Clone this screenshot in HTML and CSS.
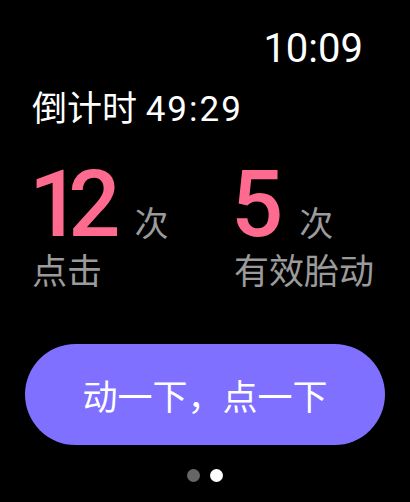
FILE: index.html
```html
<!DOCTYPE html>
<html lang="zh-CN">

<head>
    <meta charset="UTF-8">
    <meta name="viewport" content="width=device-width, initial-scale=1.0">
    <title>胎动计数</title>
    <link rel="stylesheet" href="styles.css">
</head>

<body>

    <div class="screen">
        <div class="clock">10:09</div>

        <div class="countdown">倒计时 <span class="countdown-time">49:29</span></div>

        <div class="stats">
            <div class="stat">
                <div class="stat-value"><span class="stat-number tight">12</span><span class="stat-unit">次</span></div>
                <div class="stat-label">点击</div>
            </div>
            <div class="stat">
                <div class="stat-value"><span class="stat-number">5</span><span class="stat-unit">次</span></div>
                <div class="stat-label">有效胎动</div>
            </div>
        </div>

        <button class="tap-button" type="button">动一下，点一下</button>

        <div class="dots">
            <span class="dot"></span>
            <span class="dot active"></span>
        </div>
    </div>

</body>

</html>
```

FILE: styles.css
```css
body {
    margin: 0;
    background: #000;
    font-family: Roboto, "Noto Sans CJK SC", sans-serif;
    color: #fff;
}

.screen {
    width: 410px;
    height: 502px;
    box-sizing: border-box;
    padding: 27px 25px 0;
}

.clock {
    text-align: right;
    padding-right: 22px;
    font-size: 40px;
    line-height: 44px;
}

.countdown {
    margin: 17px 0 0 7px;
    font-size: 35px;
    line-height: 44px;
}

.countdown-time {
    letter-spacing: 2px;
}

.stats {
    display: grid;
    grid-template-columns: 202px 1fr;
    margin: 31px 0 0 7px;
}

.stat-value {
    display: flex;
    align-items: baseline;
    height: 90px;
}

.stat-number {
    margin-left: -3px;
    font-size: 92px;
    line-height: 84px;
    color: #ff6b8f;
    font-weight: 500;
}

.stat-number.tight {
    letter-spacing: -13px;
    margin-right: 11px;
}

.stat-unit {
    margin-left: 16px;
    font-size: 34px;
    color: #9b9b9b;
}

.stat-label {
    font-size: 35px;
    line-height: 40px;
    color: #9b9b9b;
}

.tap-button {
    display: block;
    width: 360px;
    height: 101px;
    margin-top: 51px;
    border: none;
    border-radius: 51px;
    background: #8070ff;
    color: #fff;
    font-family: "Noto Sans CJK SC", sans-serif;
    font-size: 35px;
    padding: 0;
}

.dots {
    display: flex;
    justify-content: center;
    gap: 10px;
    margin-top: 24px;
}

.dot {
    width: 13px;
    height: 13px;
    border-radius: 50%;
    background: #666;
}

.dot.active {
    background: #fff;
}
```
